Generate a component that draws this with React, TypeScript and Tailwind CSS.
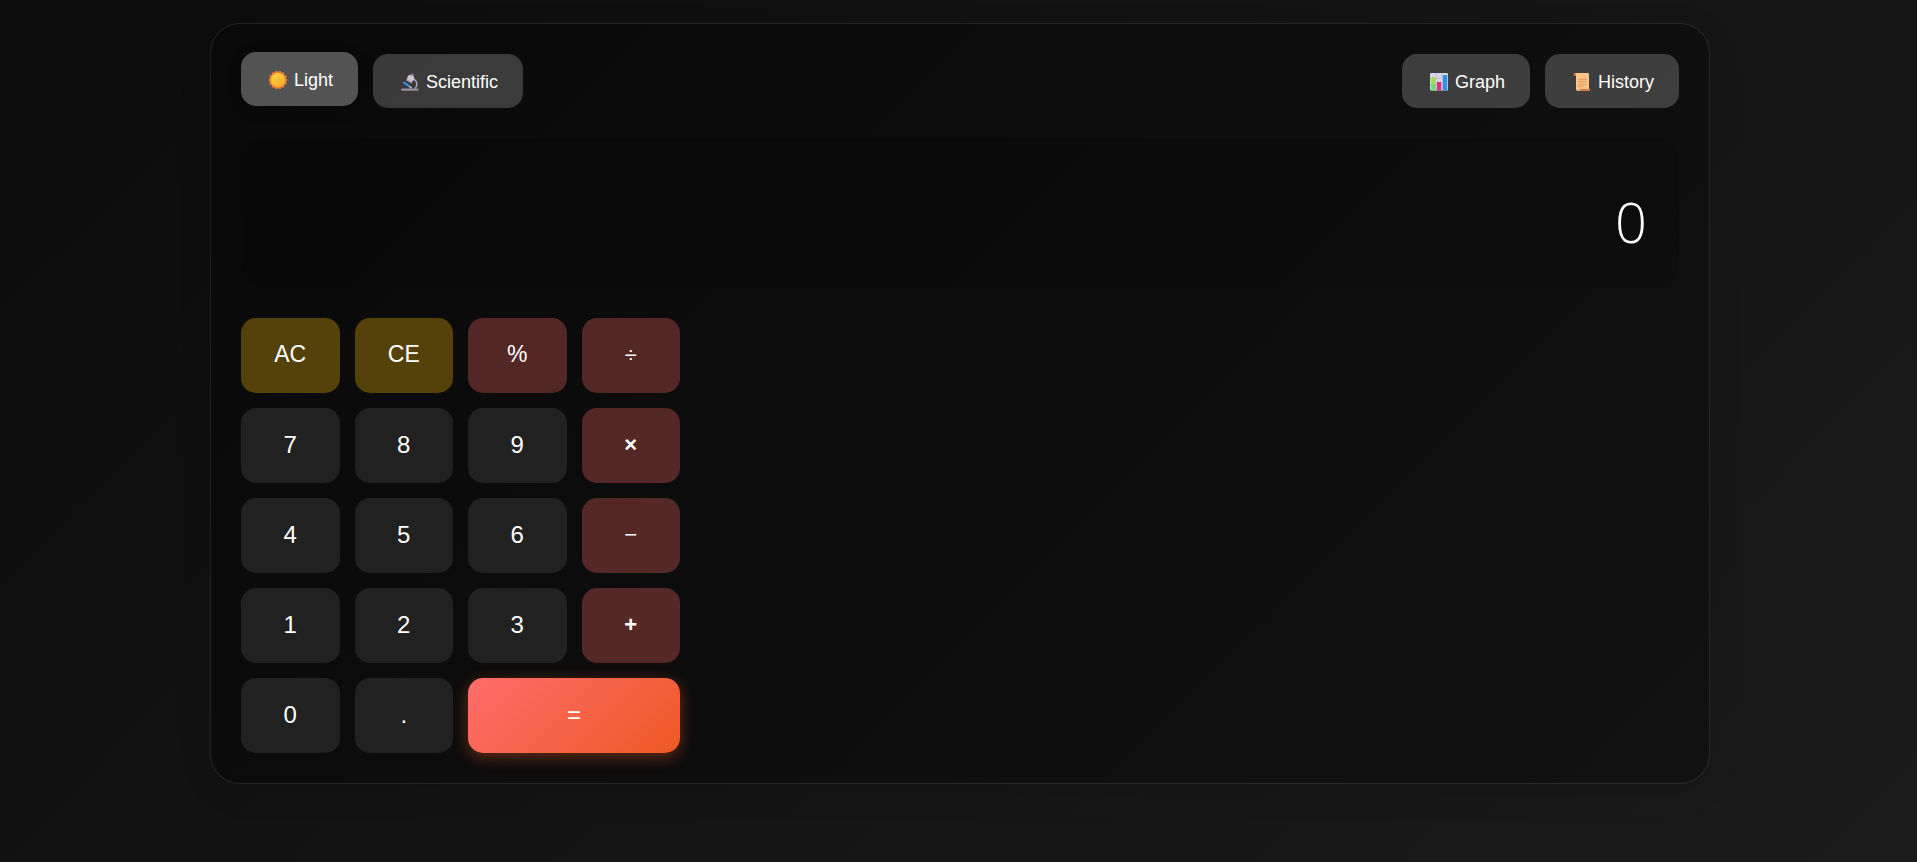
import { useState } from "react";
import type { ReactNode } from "react";

type Tone = "number" | "clear" | "percent" | "operator" | "strong" | "equals";

const toneClasses: Record<Tone, string> = {
  number: "bg-white/[0.09] text-2xl",
  clear: "bg-[#ffc107]/30 text-[23px]",
  percent: "bg-[#ff6b6b]/30 text-[23px]",
  operator: "bg-[#ff6b6b]/30 text-[22px]",
  strong: "bg-[#ff6b6b]/30 text-[22px] font-bold",
  equals:
    "col-span-2 bg-[linear-gradient(135deg,#ff6b6b,#ee5a24)] text-2xl shadow-[0_4px_15px_rgba(238,90,36,0.4)]",
};

const keys: { label: string; tone: Tone }[] = [
  { label: "AC", tone: "clear" },
  { label: "CE", tone: "clear" },
  { label: "%", tone: "percent" },
  { label: "÷", tone: "operator" },
  { label: "7", tone: "number" },
  { label: "8", tone: "number" },
  { label: "9", tone: "number" },
  { label: "×", tone: "strong" },
  { label: "4", tone: "number" },
  { label: "5", tone: "number" },
  { label: "6", tone: "number" },
  { label: "−", tone: "operator" },
  { label: "1", tone: "number" },
  { label: "2", tone: "number" },
  { label: "3", tone: "number" },
  { label: "+", tone: "strong" },
  { label: "0", tone: "number" },
  { label: ".", tone: "number" },
  { label: "=", tone: "equals" },
];

function SunIcon() {
  const points = Array.from({ length: 28 }, (_, i) => {
    const angle = (i * Math.PI) / 14;
    const radius = i % 2 === 0 ? 9.4 : 7.8;
    return `${12 + radius * Math.cos(angle)},${9 + radius * Math.sin(angle)}`;
  }).join(" ");
  return (
    <svg viewBox="0 0 24 18" className="h-[18px] w-6 overflow-visible" aria-hidden="true">
      <defs>
        <linearGradient id="sun" x1="0.2" y1="0" x2="0.8" y2="1">
          <stop offset="0" stopColor="#fcd53f" />
          <stop offset="1" stopColor="#f9a92b" />
        </linearGradient>
      </defs>
      <polygon points={points} fill="#f78334" stroke="#f78334" strokeWidth=".5" strokeLinejoin="round" />
      <circle cx="12" cy="9" r="7" fill="url(#sun)" />
    </svg>
  );
}

function MicroscopeIcon() {
  return (
    <svg viewBox="0 0 24 18" className="h-[18px] w-6" aria-hidden="true">
      <path d="M15 6.200c4.200.8 5.200 6 2 9.400" fill="none" stroke="#a79fbb" strokeWidth="1.600" />
      <rect x="3.300" y="15.600" width="17.200" height="2.200" rx=".6" fill="#998ea4" />
      <path d="M5.500 9.200l6.300 4.600" stroke="#3a9aea" strokeWidth="2" />
      <path d="M11.500 13.600l2.200 1.500" stroke="#b4acbc" strokeWidth="1.800" />
      <path d="M10 2.800l4.500-2 2 4.600-2.800 4.200-5.200-2.300z" fill="#cdc4d6" />
      <path d="M12 1.300l3-1.300 1 1.800-3 1z" fill="#72687f" />
      <path d="M8.800 7.200l5 2.500" stroke="#a095ac" strokeWidth="1.300" />
    </svg>
  );
}

function ChartIcon() {
  return (
    <svg viewBox="0 0 24 18" className="h-[18px] w-6" aria-hidden="true">
      <rect x="3" y="0" width="18" height="17.500" rx="1.200" fill="#dcd4e6" />
      <path d="M3 5.500h18M3 11.500h18M9.300 0v17.500M15 0v17.500" stroke="#c1b6cf" strokeWidth=".8" />
      <rect x="4.200" y="4.200" width="4.400" height="13.300" fill="#9be24e" />
      <rect x="4.200" y="11" width="4.400" height="6.500" fill="#70dd80" />
      <rect x="10" y="9" width="4.200" height="8.500" fill="#e0307b" />
      <rect x="15.800" y="2" width="4.400" height="15.500" fill="#2e92e5" />
    </svg>
  );
}

function ScrollIcon() {
  return (
    <svg viewBox="0 0 24 18" className="h-[18px] w-6" aria-hidden="true">
      <path d="M4.500 0h13.500q1 0 1 1v15.500H6V3H4.500q-1.500-1.500 0-3z" fill="#ffc584" />
      <path d="M4.400 0Q2.600 1.500 4.400 3H6V1.200Q6 0 4.400 0z" fill="#d3743e" />
      <path d="M8 6.200h9M8 8.700h9M8 11.200h9M8 13.300h5.500" stroke="#dc9560" strokeWidth="1" />
      <path d="M9 16h11.200q.6 2-1 2H7.500q2 0 1.500-2z" fill="#d47a4c" />
      <path d="M6 15.500H10q0 2.500-1.700 2.500Q6 18 6 16z" fill="#ffc584" />
    </svg>
  );
}

function ToolButton({
  icon,
  active = false,
  children,
}: {
  icon: ReactNode;
  active?: boolean;
  children: ReactNode;
}) {
  return (
    <button
      type="button"
      className={`flex h-[54px] items-center gap-1 rounded-[15px] px-[25px] pt-0.5 text-lg ${
        active
          ? "-translate-y-0.5 bg-white/30 shadow-[0_4px_15px_rgba(0,0,0,0.2)]"
          : "bg-white/20"
      }`}
    >
      {icon}
      <span>{children}</span>
    </button>
  );
}

export default function App() {
  const [value, setValue] = useState("0");

  const press = (label: string) => {
    if (label === "AC") setValue("0");
    else if (label === "CE") setValue((v) => (v.length > 1 ? v.slice(0, -1) : "0"));
    else if (label !== "=") setValue((v) => (v === "0" ? label : v + label));
  };

  return (
    <div className="min-h-screen bg-[linear-gradient(135deg,#0c0c0c,#1b1b1b)] pt-[23px] pr-5 pb-5 pl-[23px] font-['Liberation_Sans',Arial,sans-serif] text-white">
      <main className="mx-auto flex max-w-[1500px] flex-col gap-[30px] rounded-[30px] border border-white/10 bg-black/30 p-[30px] shadow-[0_8px_32px_rgba(0,0,0,0.1)]">
        <header className="flex flex-wrap items-center justify-between gap-[15px]">
          <div className="flex gap-[15px]">
            <ToolButton icon={<SunIcon />} active>
              Light
            </ToolButton>
            <ToolButton icon={<MicroscopeIcon />}>Scientific</ToolButton>
          </div>
          <div className="flex gap-[15px]">
            <ToolButton icon={<ChartIcon />}>Graph</ToolButton>
            <ToolButton icon={<ScrollIcon />}>History</ToolButton>
          </div>
        </header>
        <output className="flex min-h-[150px] items-center justify-end rounded-[20px] bg-black/10 px-8 pt-4 font-['Open_Sans',sans-serif] text-[56px] leading-[80px] font-light">
          {value}
        </output>
        <div className="grid w-full max-w-[439px] grid-cols-4 gap-[15px]">
          {keys.map(({ label, tone }) => (
            <button
              key={label}
              type="button"
              onClick={() => press(label)}
              className={`h-[75px] rounded-[15px] pb-0.5 ${toneClasses[tone]}`}
            >
              {label}
            </button>
          ))}
        </div>
      </main>
    </div>
  );
}
